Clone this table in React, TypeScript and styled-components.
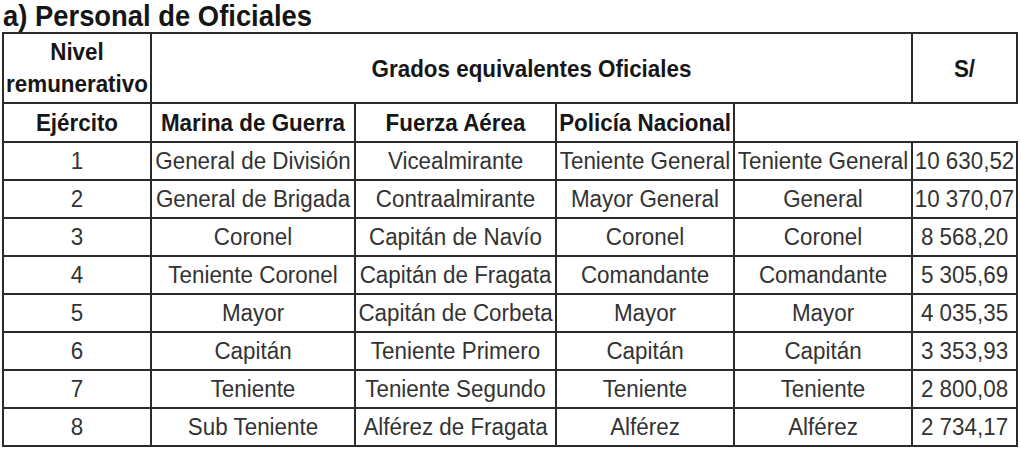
import React from 'react';
import styled, { createGlobalStyle } from 'styled-components';

const GlobalStyle = createGlobalStyle`
  html, body {
    margin: 0;
    padding: 0;
    background: #ffffff;
  }
  body {
    font-family: "Liberation Sans", Arial, sans-serif;
  }
`;

const Page = styled.div`
  width: 1021px;
  height: 450px;
  padding: 0 0 0 2px;
  box-sizing: border-box;
  overflow: hidden;
`;

const Title = styled.h1`
  margin: 0 0 0 1px;
  height: 32px;
  font-size: 27.4px;
  line-height: 30px;
  font-weight: 700;
  color: #151515;
  transform: scaleY(1.1);
  transform-origin: left top;
`;

const Table = styled.table`
  border-collapse: collapse;
  table-layout: fixed;
  width: 1016px;
  color: #333333;
  font-size: 22.4px;
`;

const HeadRow = styled.tr<{ $tall?: boolean }>`
  height: ${(p) => (p.$tall ? 70 : 39)}px;
`;

const DataRow = styled.tr`
  height: 38px;
`;

const Head = styled.th<{ $open?: boolean }>`
  border: 2px solid #2b2b2b;
  ${(p) => (p.$open ? 'border-right: none;' : '')}
  padding: 0;
  font-weight: 700;
  color: #161616;
  text-align: center;
  vertical-align: middle;
  line-height: 29px;
  white-space: nowrap;
`;

const Cell = styled.td`
  border: 2px solid #2b2b2b;
  padding: 0;
  text-align: center;
  vertical-align: middle;
  line-height: 26px;
  white-space: nowrap;
`;

/* the source glyphs are a little taller than they are wide */
const Text = styled.span`
  display: inline-block;
  transform: scaleY(1.1);
`;

const widths = [148, 204, 201, 178, 178, 105];

const rows: [string, string, string, string, string, string][] = [
  ['1', 'General de División', 'Vicealmirante', 'Teniente General', 'Teniente General', '10 630,52'],
  ['2', 'General de Brigada', 'Contraalmirante', 'Mayor General', 'General', '10 370,07'],
  ['3', 'Coronel', 'Capitán de Navío', 'Coronel', 'Coronel', '8 568,20'],
  ['4', 'Teniente Coronel', 'Capitán de Fragata', 'Comandante', 'Comandante', '5 305,69'],
  ['5', 'Mayor', 'Capitán de Corbeta', 'Mayor', 'Mayor', '4 035,35'],
  ['6', 'Capitán', 'Teniente Primero', 'Capitán', 'Capitán', '3 353,93'],
  ['7', 'Teniente', 'Teniente Segundo', 'Teniente', 'Teniente', '2 800,08'],
  ['8', 'Sub Teniente', 'Alférez de Fragata', 'Alférez', 'Alférez', '2 734,17'],
];

export default function App() {
  return (
    <>
      <GlobalStyle />
      <Page>
        <Title>a) Personal de Oficiales</Title>
        <Table>
          <colgroup>
            {widths.map((w, i) => (
              <col key={i} style={{ width: w }} />
            ))}
          </colgroup>
          <thead>
            <HeadRow $tall>
              <Head>
                <Text>
                  Nivel
                  <br />
                  remunerativo
                </Text>
              </Head>
              <Head colSpan={4}>
                <Text>Grados equivalentes Oficiales</Text>
              </Head>
              <Head>
                <Text>S/</Text>
              </Head>
            </HeadRow>
            <HeadRow>
              <Head>
                <Text>Ejército</Text>
              </Head>
              <Head>
                <Text>Marina de Guerra</Text>
              </Head>
              <Head>
                <Text>Fuerza Aérea</Text>
              </Head>
              <Head>
                <Text>Policía Nacional</Text>
              </Head>
              <Head colSpan={2} $open />
            </HeadRow>
          </thead>
          <tbody>
            {rows.map((r) => (
              <DataRow key={r[0]}>
                {r.map((v, i) => (
                  <Cell key={i}>
                    <Text>{v}</Text>
                  </Cell>
                ))}
              </DataRow>
            ))}
          </tbody>
        </Table>
      </Page>
    </>
  );
}
